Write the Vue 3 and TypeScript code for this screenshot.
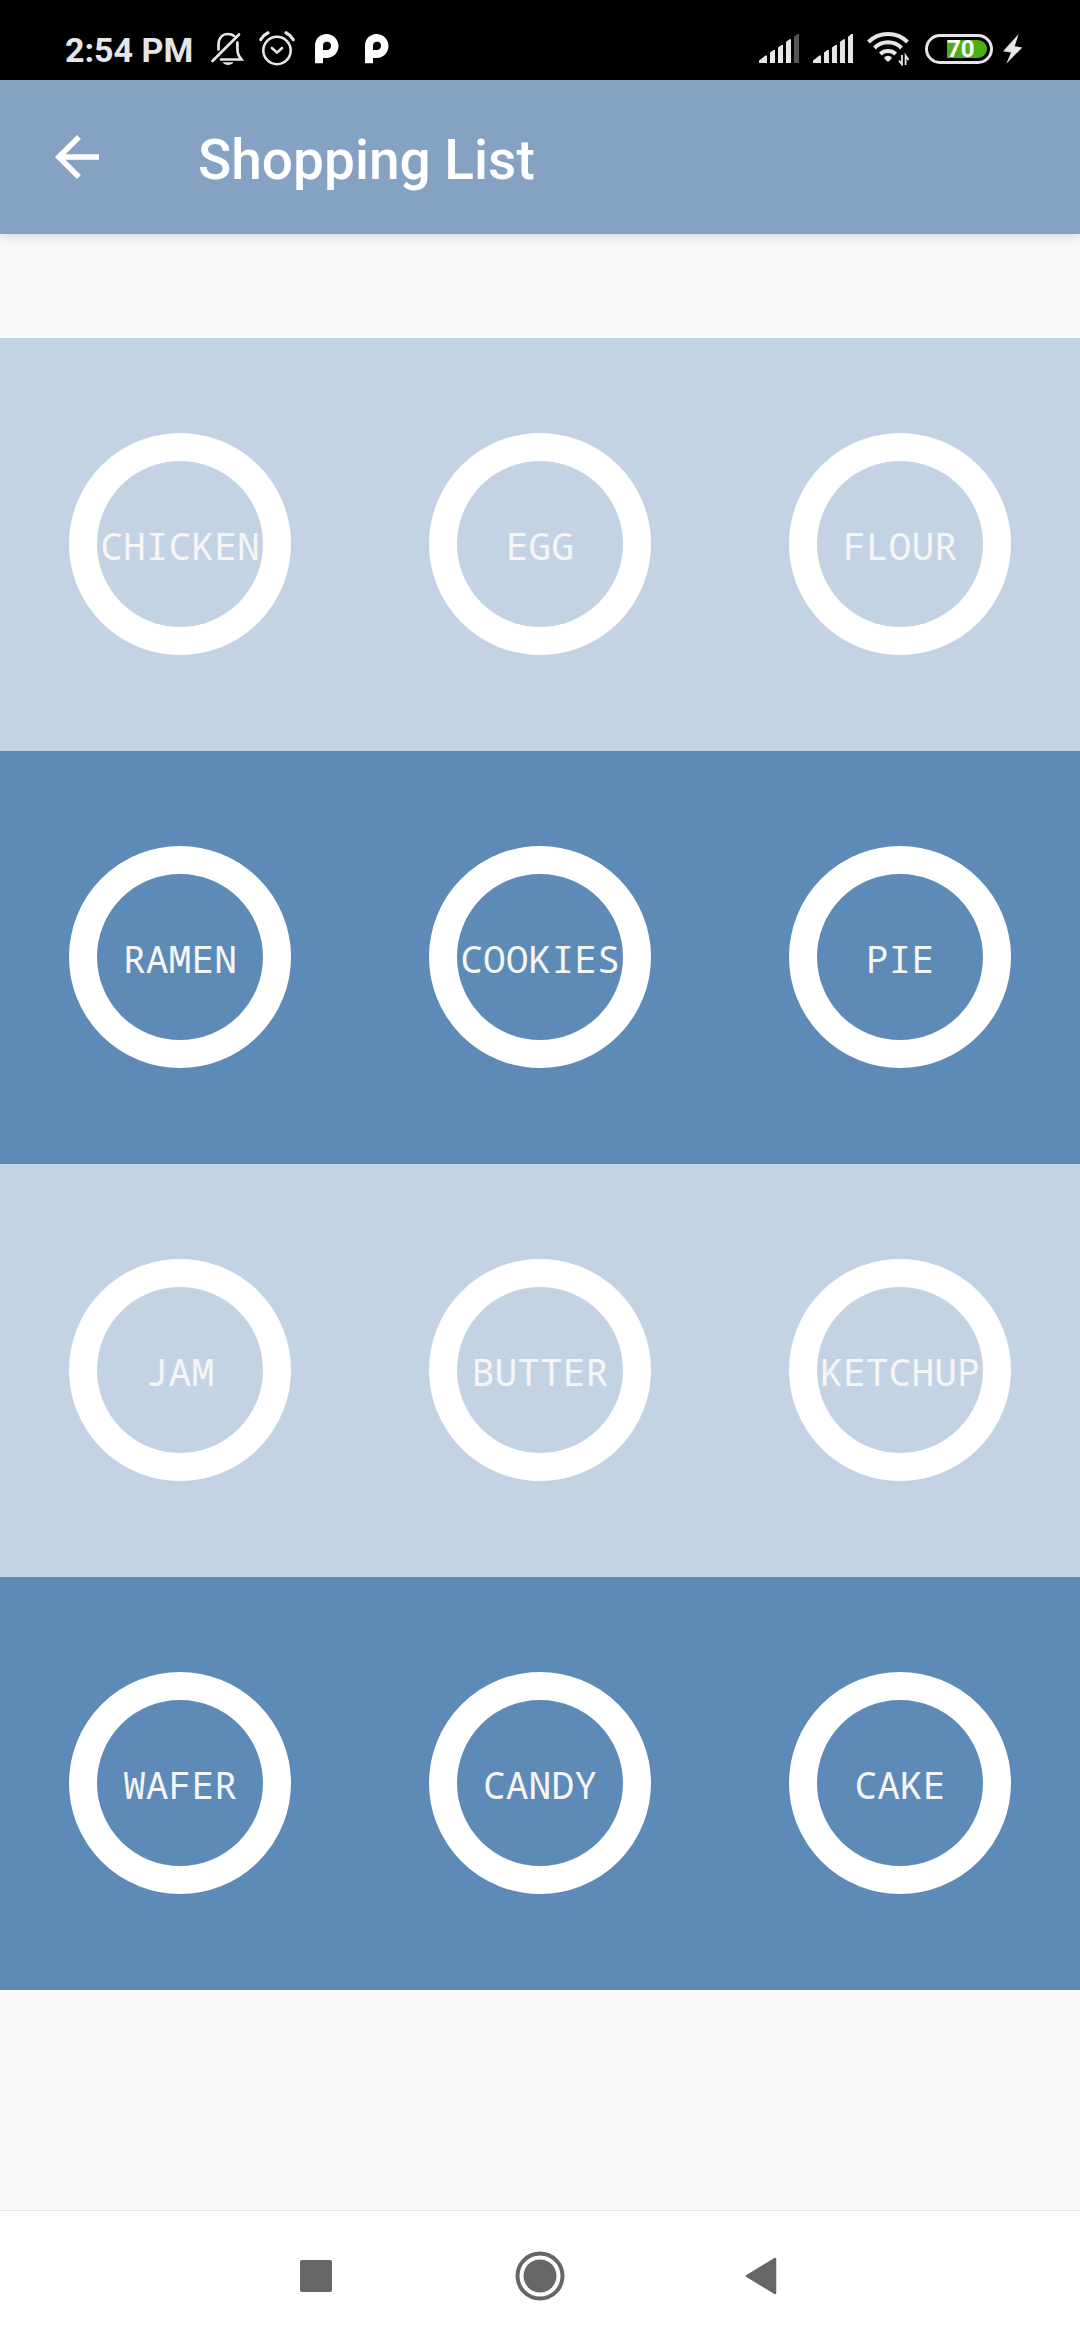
<script setup lang="ts">
interface Shelf {
  tone: 'light' | 'dark'
  items: string[]
}

const shelves: Shelf[] = [
  { tone: 'light', items: ['CHICKEN', 'EGG', 'FLOUR'] },
  { tone: 'dark', items: ['RAMEN', 'COOKIES', 'PIE'] },
  { tone: 'light', items: ['JAM', 'BUTTER', 'KETCHUP'] },
  { tone: 'dark', items: ['WAFER', 'CANDY', 'CAKE'] },
]

const signals = [{ weak: true }, { weak: false }]
</script>

<template>
  <div class="screen">
    <div class="status">
      <div class="status-group">
        <span class="clock">2:54 PM</span>
        <svg class="bell" width="34" height="34" viewBox="0 0 34 34" fill="none" stroke="#e6e6e6" stroke-width="2.7" stroke-linecap="round">
          <path d="M8.5 17.5V13C8.5 6 12.5 2 18 2c2.6 0 4.6.7 6.2 2" />
          <path d="M27.4 10.5V17c0 4.5 1.4 7.5 4 10.5H11" />
          <path d="M2.5 29L29 2.5" />
          <path d="M12.5 30.2h11c-1.3 1.8-3 2.8-5.4 2.8s-4.300-1-5.600-2.800z" fill="#e6e6e6" stroke="none" />
        </svg>
        <svg class="alarm" width="36" height="36" viewBox="0 0 36 36" fill="none" stroke="#e6e6e6" stroke-width="2.6" stroke-linecap="round" stroke-linejoin="round">
          <circle cx="18" cy="19.5" r="13.7" />
          <path d="M12.9 17l5.1 4.6 5.1-4.6" />
          <path d="M1.8 8.5C3.5 5.5 5.800 3.400 9 1.800M34.200 8.500C32.500 5.500 30.200 3.400 27 1.800" stroke-width="3.2" />
        </svg>
        <svg v-for="n in 2" :key="n" class="park" width="24" height="30" viewBox="0 0 24 30">
          <path fill="#fff" fill-rule="evenodd" d="M0 29.300V11.500C0 5 5 0 11.500 0S23.500 5 23.500 12 18 24 12 24H8v5.300zM8 16h4a4 4 0 0 0 4-4.200 4 4 0 0 0-8 0z" />
        </svg>
      </div>
      <div class="status-group">
        <svg v-for="(signal, i) in signals" :key="i" class="signal" width="40" height="30" viewBox="0 0 40 30" fill="#e6e6e6">
          <path d="M0 29v-2.500L6.500 21.500H8V29z" />
          <path d="M11 29V18.500L14.500 16H16v13z" />
          <path d="M19 29V13.500L22.500 11H24v18z" />
          <path d="M27 29V8L30.500 5.300H32V29z" />
          <path d="M35 29V2.700L38.500 0H40v29z" :fill="signal.weak ? '#555' : '#e6e6e6'" />
        </svg>
        <svg class="wifi" width="43" height="34" viewBox="0 0 43 34" fill="none" stroke="#e6e6e6">
          <path d="M1.500 10A28 28 0 0 1 40.500 10" stroke-width="4" />
          <path d="M7.500 16A19 19 0 0 1 34.500 16" stroke-width="4" />
          <path d="M13.300 22A11.500 11.500 0 0 1 28.700 22" stroke-width="4" />
          <path d="M17 26c1-1.500 2.500-2.200 4-2.200s3 .7 4 2.200l-3 3.200q-1 .8-2 0z" fill="#e6e6e6" stroke="none" />
          <path d="M35 23v9.500L32 28.500M38.600 33v-9.500L41.500 28" stroke-width="1.800" />
        </svg>
        <span class="battery"><span class="charge">70</span></span>
        <svg class="bolt" width="20" height="30" viewBox="0 0 20 30">
          <path d="M15.700 0L0 17.300l8 1.200L3.300 29.700 19.300 13.500l-7.600-1.300z" fill="#e6e6e6" />
        </svg>
      </div>
    </div>

    <header class="app-bar">
      <button class="back" type="button" aria-label="Navigate up">
        <svg width="66" height="66" viewBox="0 0 24 24" fill="#fff">
          <path d="M20 11H7.830l5.590-5.590L12 4l-8 8 8 8 1.410-1.410L7.830 13H20v-2z" />
        </svg>
      </button>
      <h1 class="title">Shopping List</h1>
    </header>

    <main class="content">
      <section v-for="(shelf, i) in shelves" :key="i" class="shelf" :class="shelf.tone">
        <button v-for="item in shelf.items" :key="item" class="item" type="button">{{ item }}</button>
      </section>
    </main>

    <nav class="nav-bar" aria-label="System navigation">
      <button type="button" aria-label="Recent apps">
        <svg width="32" height="32" viewBox="0 0 32 32" fill="#666"><rect width="32" height="32" rx="2" /></svg>
      </button>
      <button type="button" aria-label="Home">
        <svg width="50" height="50" viewBox="0 0 50 50" fill="#666">
          <circle cx="25" cy="25" r="22.500" fill="none" stroke="#666" stroke-width="4" />
          <circle cx="25" cy="25" r="16.500" />
        </svg>
      </button>
      <button type="button" aria-label="Back">
        <svg width="38" height="38" viewBox="0 0 38 38">
          <path d="M2 19L30 2v34z" fill="#666" stroke="#666" stroke-width="2.500" stroke-linejoin="round" />
        </svg>
      </button>
    </nav>
  </div>
</template>

<style>
body {
  margin: 0;
}
</style>

<style scoped>
.screen {
  display: flex;
  flex-direction: column;
  min-height: 100vh;
  background: #fafafa;
  font-family: Roboto, sans-serif;
}

button {
  padding: 0;
  border: 0;
  background: none;
}

svg {
  display: block;
  flex: none;
}

.status {
  display: flex;
  justify-content: space-between;
  height: 80px;
  box-sizing: border-box;
  padding: 20px 57px 0 65px;
  background: #000;
}

.status-group {
  display: flex;
  align-items: center;
  height: 58px;
}

.clock {
  padding-top: 2px;
  color: #e6e6e6;
  font-size: 34px;
  font-weight: 700;
  line-height: 40px;
}

.bell {
  margin-left: 17px;
}

.alarm {
  margin-left: 15px;
}

.park {
  margin-left: 20px;
}

.park + .park {
  margin-left: 26px;
}

.signal {
  margin-right: 14px;
}

.battery {
  display: flex;
  justify-content: flex-end;
  align-items: center;
  box-sizing: border-box;
  width: 68px;
  height: 30px;
  margin: 0 10px 0 15px;
  padding-right: 3px;
  border: 3px solid #e6e6e6;
  border-radius: 15px;
}

.charge {
  width: 40px;
  height: 18px;
  border-radius: 0 9px 9px 0;
  background: #4caf16;
  color: #fff;
  font-size: 24px;
  font-weight: 700;
  line-height: 18px;
}

.app-bar {
  display: flex;
  align-items: center;
  height: 154px;
  padding-left: 44px;
  background: #86a2c3;
  box-shadow: 0 3px 12px rgba(0, 0, 0, 0.14);
}

.title {
  margin: 0 0 0 88px;
  padding-top: 6px;
  color: #fff;
  font-size: 55px;
  font-weight: 500;
  line-height: 64px;
}

.content {
  flex: 1;
  padding-top: 104px;
}

.shelf {
  display: grid;
  grid-template-columns: repeat(3, 1fr);
  place-items: center;
  padding: 95px 0 96px;
}

.light {
  background: #c4d3e3;
}

.dark {
  background: #5e8ab7;
}

.item {
  display: flex;
  justify-content: center;
  align-items: center;
  box-sizing: border-box;
  width: 222px;
  height: 222px;
  padding-top: 2px;
  border: 28px solid #fff;
  border-radius: 50%;
  color: #f5f5f5;
  font-family: "Droid Sans Mono", "Noto Sans Mono", "DejaVu Sans Mono", monospace;
  font-size: 38px;
  line-height: 44px;
}

.nav-bar {
  display: flex;
  justify-content: center;
  height: 129px;
  border-top: 1px solid #e5e5e5;
  background: #fff;
}

.nav-bar button {
  display: flex;
  justify-content: center;
  align-items: center;
  width: 224px;
}
</style>
